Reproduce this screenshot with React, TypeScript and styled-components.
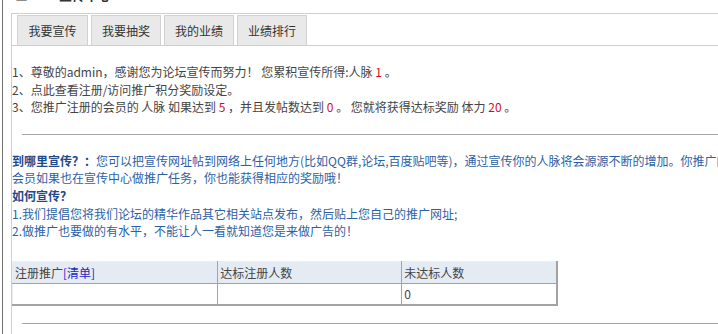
import React from "react";
import styled, { createGlobalStyle } from "styled-components";

const GlobalStyle = createGlobalStyle`
  html, body {
    margin: 0;
    padding: 0;
    overflow: hidden;
    background: #fff;
  }
  body {
    font-family: "Noto Sans CJK SC", "Microsoft YaHei", sans-serif;
    font-size: 12px;
    color: #444;
  }
`;

const Frame = styled.div`
  margin-left: 2px;
  border-left: 1px solid #707070;
  padding-left: 8px;
  height: 334px;
  box-sizing: border-box;
  width: 780px;
`;

const TitleClip = styled.div`
  height: 13px;
  overflow: hidden;
`;

const Title = styled.div`
  margin-top: -13px;
  padding-left: 4px;
  font-size: 13px;
  line-height: 16px;
  font-weight: bold;
  color: #333;
  display: flex;
  gap: 12px;
  white-space: nowrap;
`;

const Box = styled.div`
  border-left: 1px solid #cfcfcf;
  border-top: 1px solid #cfcfcf;
  height: 321px;
  box-sizing: border-box;
`;

const TabBar = styled.div`
  display: flex;
  align-items: flex-end;
  gap: 3px;
  height: 32px;
  box-sizing: border-box;
  padding: 1px 0 0 5px;
  border-bottom: 1px solid #cfcfcf;
`;

const Tab = styled.div<{ $w: number }>`
  width: ${(p) => p.$w}px;
  height: 30px;
  box-sizing: border-box;
  display: flex;
  align-items: center;
  justify-content: center;
  background: #e9e9e9;
  border: 1px solid #d2d2d2;
  border-bottom: none;
  color: #333;
  font-size: 12px;
`;

const Lines = styled.div<{ $top: number }>`
  margin-top: ${(p) => p.$top}px;
  line-height: 17.5px;
  white-space: nowrap;
`;

const Red = styled.span`
  color: #d10f1f;
`;

const Rule = styled.div<{ $top: number }>`
  margin: ${(p) => p.$top}px 0 0 10px;
  border-top: 1px solid #a5a5a5;
`;

const BlueLines = styled.div`
  margin-top: 17px;
  line-height: 17.7px;
  white-space: nowrap;
  color: #2d5fa6;
`;

const Label = styled.b`
  color: #1d4a8a;
  font-weight: bold;
`;

const Table = styled.table`
  margin-top: 21px;
  border-collapse: collapse;
  width: 546px;
  border-top: 1px solid #eeeeee;
  border-left: 1px solid #eeeeee;
  border-right: 2px solid #a3a3a3;
  border-bottom: 2px solid #a3a3a3;
  font-size: 12px;
  color: #444;
`;

const HeadCell = styled.td<{ $w: number }>`
  width: ${(p) => p.$w}px;
  height: 22px;
  padding: 0 2px;
  box-sizing: border-box;
  background: #e5ebf2;
  border-bottom: 1px solid #a3a3a3;
  border-left: 1px solid #a3a3a3;
  &:first-child {
    border-left: none;
  }
`;

const BodyCell = styled.td`
  height: 21px;
  padding: 0 2px;
  box-sizing: border-box;
  border-left: 1px solid #a3a3a3;
  &:first-child {
    border-left: none;
  }
`;

const LinkText = styled.span`
  color: #2424c8;
`;

export default function App() {
  const tabs = [
    { t: "我要宣传", w: 71 },
    { t: "我要抽奖", w: 70 },
    { t: "我的业绩", w: 70 },
    { t: "业绩排行", w: 70 },
  ];
  return (
    <>
      <GlobalStyle />
      <Frame>
        <TitleClip>
          <Title>
            <span>■</span>
            <span>»</span>
            <span>宣传中心</span>
          </Title>
        </TitleClip>
        <Box>
          <TabBar>
            {tabs.map((x) => (
              <Tab key={x.t} $w={x.w}>
                {x.t}
              </Tab>
            ))}
          </TabBar>
          <Lines $top={17}>
            <div>
              1、尊敬的admin，感谢您为论坛宣传而努力！ 您累积宣传所得:人脉 <Red>1</Red> 。
            </div>
            <div>2、点此查看注册/访问推广积分奖励设定。</div>
            <div>
              3、您推广注册的会员的 人脉 如果达到 <Red>5</Red> ，并且发帖数达到 <Red>0</Red> 。 您就将获得达标奖励 体力 <Red>20</Red> 。
            </div>
          </Lines>
          <Rule $top={18} />
          <BlueLines>
            <div>
              <Label>到哪里宣传？：</Label>
              您可以把宣传网址帖到网络上任何地方(比如QQ群,论坛,百度贴吧等)，通过宣传你的人脉将会源源不断的增加。你推广的
            </div>
            <div>会员如果也在宣传中心做推广任务，你也能获得相应的奖励哦！</div>
            <div>
              <Label>如何宣传？</Label>
            </div>
            <div>1.我们提倡您将我们论坛的精华作品其它相关站点发布，然后贴上您自己的推广网址;</div>
            <div>2.做推广也要做的有水平，不能让人一看就知道您是来做广告的！</div>
          </BlueLines>
          <Table>
            <tbody>
              <tr>
                <HeadCell $w={205}>
                  注册推广<LinkText>[清单]</LinkText>
                </HeadCell>
                <HeadCell $w={184}>达标注册人数</HeadCell>
                <HeadCell $w={155}>未达标人数</HeadCell>
              </tr>
              <tr>
                <BodyCell />
                <BodyCell />
                <BodyCell>0</BodyCell>
              </tr>
            </tbody>
          </Table>
          <Rule $top={17} />
        </Box>
      </Frame>
    </>
  );
}
